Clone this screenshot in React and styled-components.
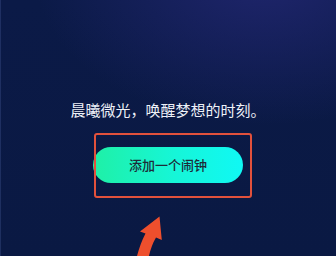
import React from "react";
import styled, { createGlobalStyle } from "styled-components";

const Global = createGlobalStyle`
  html, body { margin: 0; padding: 0; }
  body { width: 336px; height: 256px; overflow: hidden; background: #0a1943; }
`;

const Page = styled.div`
  position: relative;
  width: 336px;
  height: 256px;
  box-sizing: border-box;
  padding-top: 100px;
  display: flex;
  flex-direction: column;
  align-items: center;
  overflow: hidden;
  font-family: "Noto Sans CJK SC", "Noto Sans", sans-serif;
  background:
    radial-gradient(ellipse 230px 150px at 265px -25px, rgba(36, 40, 118, 0.8), rgba(36, 40, 118, 0) 100%),
    linear-gradient(180deg, #0b1a47 0%, #0a1943 100%);
  box-shadow: inset 1px 0 0 rgba(70, 90, 150, 0.35);
`;

const Slogan = styled.p`
  margin: 0;
  font-size: 15px;
  line-height: 20px;
  color: #eef1f8;
  white-space: nowrap;
`;

const ButtonWrap = styled.div`
  position: relative;
  margin-top: 27px;
`;

const AddButton = styled.button`
  width: 150px;
  height: 36px;
  border: none;
  border-radius: 18px;
  padding: 0;
  background: linear-gradient(90deg, #1ff0a6 0%, #16f6d8 55%, #10f8f4 100%);
  color: #1d2b38;
  font-family: "Noto Sans CJK SC", "Noto Sans", sans-serif;
  font-size: 13px;
  font-weight: 500;
  line-height: 36px;
  cursor: pointer;
`;

const Highlight = styled.div`
  position: absolute;
  left: 1px;
  top: -14px;
  width: 158px;
  height: 65px;
  box-sizing: border-box;
  border: 2.5px solid #e2513c;
  border-radius: 3px;
  pointer-events: none;
`;

const Arrow = styled.svg`
  position: absolute;
  left: 130px;
  top: 210px;
  width: 40px;
  height: 46px;
  overflow: visible;
`;

export default function App() {
  return (
    <>
      <Global />
      <Page>
        <Slogan>晨曦微光，唤醒梦想的时刻。</Slogan>
        <ButtonWrap>
          <AddButton>添加一个闹钟</AddButton>
          <Highlight />
        </ButtonWrap>
        <Arrow viewBox="130 210 40 46">
          <path
            d="M159.5 216.5 L140 231.5 L145.5 233.5 Q140 244 136.5 258 L148.5 258 Q151 246 156 237.5 L161.8 240 Z"
            fill="#ee4f2d"
          />
        </Arrow>
      </Page>
    </>
  );
}
